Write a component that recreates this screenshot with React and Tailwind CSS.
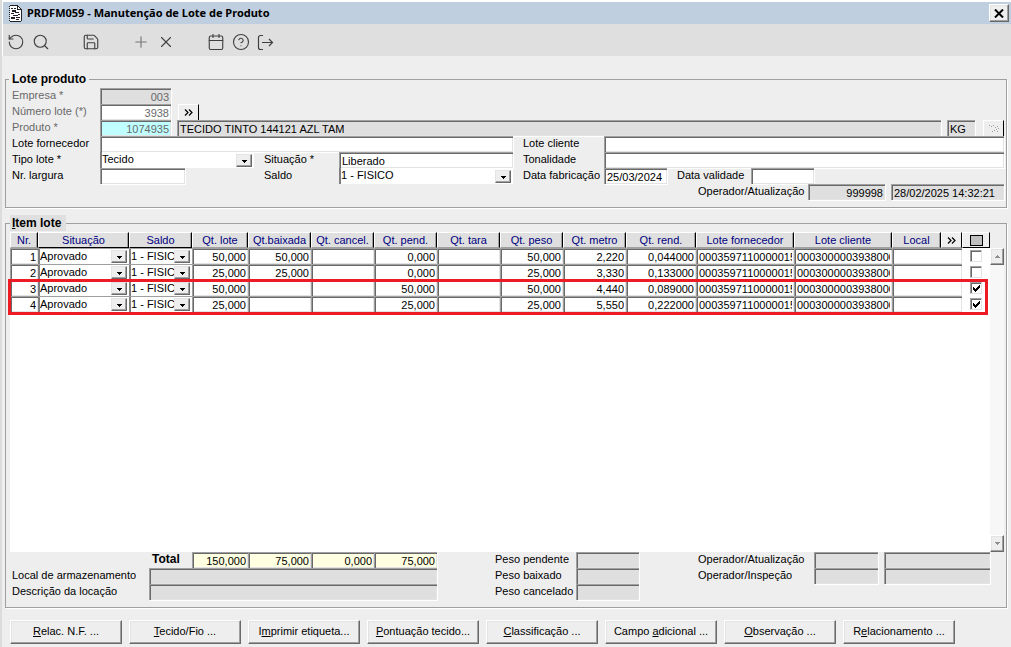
import React from 'react';
import { RotateCcw, Search, Save, Plus, X, Calendar, CircleHelp, LogOut } from 'lucide-react';
import clsx from 'clsx';

const sunken =
  'block h-4 min-w-0 rounded-none border-0 border-l border-t border-[#a0a0a0] px-[2px] leading-[15px] outline-none shadow-[inset_1px_1px_#696969,inset_-1px_-1px_#e3e3e3,1px_1px_#ffffff]';

const raised =
  'border border-t-white border-l-white border-r-[#696969] border-b-[#696969] bg-[#eeeeee] shadow-[inset_-1px_-1px_#a0a0a0,inset_1px_1px_#e3e3e3]';

const Field = ({ id, label, value = '', className = 'bg-white' }) => (
  <input id={id} aria-label={label} defaultValue={value} className={clsx(sunken, className)} />
);

const Label = ({ htmlFor, className, children }) => (
  <label htmlFor={htmlFor} className={clsx('shrink-0 whitespace-nowrap leading-[14px]', className)}>{children}</label>
);

const Dropdown = ({ id, label, value, className }) => (
  <span className={clsx('relative block h-4 bg-white', className)}>
    <select id={id} aria-label={label} defaultValue={value} className="block h-full w-full appearance-none rounded-none border-l-2 border-[#808080] bg-white pb-[2px] pr-[18px] text-[11px] leading-[14px] outline-none">
      <option>{value}</option>
    </select>
    <span className="pointer-events-none absolute bottom-px right-[2px] flex h-[13px] w-4 items-center justify-center border border-t-[#e3e3e3] border-l-[#e3e3e3] border-r-[#696969] border-b-[#696969] bg-[#eeeeee] shadow-[inset_-1px_-1px_#a0a0a0]">
      <svg width="5" height="3" viewBox="0 0 5 3" className="mt-[2px]" shapeRendering="crispEdges"><path d="M0 0h5v1H4v1H3v1H2V2H1V1H0z" /></svg>
    </span>
  </span>
);

const Chevrons = () => (
  <svg width="9" height="7" viewBox="0 0 9 7" fill="none" stroke="currentColor" strokeWidth="1.2">
    <path d="M1 .5l3 3-3 3M5 .5l3 3-3 3" />
  </svg>
);

const DocumentIcon = () => (
  <svg width="13" height="17" viewBox="0 0 13 17" shapeRendering="crispEdges">
    <path d="M1 1h8l3 3v12H1z" fill="#fff" />
    <path d="M1 0h8v1H1zM9 1h1v1H9zM10 2h1v1h-1zM11 3h1v1h-1zM12 4h1v12h-1zM1 16h11v1H1zM8 1h1v4H8zM8 4h4v1H8z" fill="#222" />
    <path d="M0 1h1v1H0zM0 3h1v1H0zM0 5h1v1H0zM0 7h1v1H0zM0 9h1v1H0zM0 11h1v1H0zM0 13h1v1H0zM0 15h1v1H0z" fill="#222" />
    <path d="M2 3h2v1H2zM5 3h2v1H5zM3 5h4v2H3zM2 8h3v1H2zM6 7h4v1H6zM4 10h5v1H4zM9 9h2v1H9zM2 12h4v2H2zM7 12h4v1H7zM7 14h3v1H7z" fill="#222" />
  </svg>
);

const toolbar = [
  { label: 'Desfazer', icon: RotateCcw },
  { label: 'Pesquisar', icon: Search },
  { label: 'Salvar', icon: Save, className: 'ml-[25px]' },
  { label: 'Incluir', icon: Plus, className: 'ml-[25px] text-[#777777]' },
  { label: 'Excluir', icon: X },
  { label: 'Calendário', icon: Calendar, className: 'ml-[25px]' },
  { label: 'Ajuda', icon: CircleHelp },
  { label: 'Sair', icon: LogOut },
];

const ExitIcon = () => (
  <svg width="17" height="17" viewBox="0 0 17 17" fill="none" stroke="currentColor" strokeWidth="1.2">
    <path d="M6 1.5H3.500a2 2 0 0 0-2 2v10a2 2 0 0 0 2 2H6M5 8.500h10.500M12 5l3.500 3.500L12 12" />
  </svg>
);

const columns = [
  { name: 'Nr.', col: 'w-[28px]' },
  { name: 'Situação', col: 'w-[91px]', dark: true },
  { name: 'Saldo', col: 'w-[63px]', dark: true },
  { name: 'Qt. lote', col: 'w-[56px]' },
  { name: 'Qt.baixada', col: 'w-[63px]' },
  { name: 'Qt. cancel.', col: 'w-[63px]' },
  { name: 'Qt. pend.', col: 'w-[63px]' },
  { name: 'Qt. tara', col: 'w-[63px]' },
  { name: 'Qt. peso', col: 'w-[63px]' },
  { name: 'Qt. metro', col: 'w-[63px]' },
  { name: 'Qt. rend.', col: 'w-[70px]' },
  { name: 'Lote fornecedor', col: 'w-[98px]' },
  { name: 'Lote cliente', col: 'w-[98px]' },
  { name: 'Local', col: '' },
];

const rows = [
  { nr: '1', qts: ['50,000', '50,000', '', '0,000', '', '50,000', '2,220', '0,044000'], checked: false },
  { nr: '2', qts: ['25,000', '25,000', '', '0,000', '', '25,000', '3,330', '0,133000'], checked: false },
  { nr: '3', qts: ['50,000', '', '', '50,000', '', '50,000', '4,440', '0,089000'], checked: true },
  { nr: '4', qts: ['25,000', '', '', '25,000', '', '25,000', '5,550', '0,222000'], checked: true },
];

const actions = [
  ['', 'R', 'elac. N.F. ...'],
  ['', 'T', 'ecido/Fio ...'],
  ['I', 'm', 'primir etiqueta...'],
  ['', 'P', 'ontuação tecido...'],
  ['', 'C', 'lassificação ...'],
  ['Campo ', 'a', 'dicional ...'],
  ['', 'O', 'bservação ...'],
  ['R', 'e', 'lacionamento ...'],
];

const LoteProduto = () => (
  <fieldset className="mt-[15px] border border-[#a0a0a0] px-[2px] pb-[7px] pt-px shadow-[1px_1px_#ffffff]">
    <legend className="ml-px h-4 px-[3px] text-[12px] font-bold">Lote produto</legend>
    <div className="pl-1">
      <div className="flex h-4 text-[#696969]">
        <Label htmlFor="empresa" className="w-[88px]">Empresa *</Label>
        <Field id="empresa" value="003" className="w-[71px] bg-[#dfdfdf] text-right" />
      </div>
      <div className="flex h-4 text-[#696969]">
        <Label htmlFor="numero" className="w-[88px]">Número lote (*)</Label>
        <Field id="numero" value="3938" className="w-[71px] bg-white text-right" />
        <button aria-label="Detalhes do lote" className="ml-[7px] flex h-4 w-[21px] items-center justify-center border-l border-t border-r border-l-white border-t-white border-r-black text-black"><Chevrons /></button>
      </div>
      <div className="flex h-4">
        <Label htmlFor="produto" className="w-[88px] text-[#696969]">Produto *</Label>
        <Field id="produto" value="1074935" className="w-[71px] bg-[#c0ffff] text-right text-[#696969]" />
        <Field label="Descrição do produto" value="TECIDO TINTO 144121 AZL TAM" className="ml-[6px] flex-1 bg-[#dfdfdf]" />
        <Field label="Unidade" value="KG" className="ml-[6px] w-[28px] bg-[#dfdfdf]" />
        <button disabled aria-label="Detalhes do produto" className="ml-2 flex h-4 w-[21px] items-center justify-center border-l border-t border-r border-l-white border-t-white border-r-black text-[#a0a0a0]">
          <svg width="12" height="9" viewBox="0 0 12 9" fill="currentColor" shapeRendering="crispEdges"><path d="M1 1h1v1H1zM3 2h1v1H3zM5 1h1v1H5zM7 3h1v1H7zM9 2h1v1H9zM8 5h1v1H8zM6 6h1v1H6zM4 7h1v1H4zM10 4h1v1h-1zM9 7h1v1H9z" /></svg>
        </button>
      </div>
      <div className="flex">
        <div className="w-[501px] shrink-0">
          <div className="flex h-4">
            <Label htmlFor="fornecedor" className="w-[88px]">Lote fornecedor</Label>
            <Field id="fornecedor" className="flex-1 bg-white" />
          </div>
          <div className="flex h-4">
            <Label htmlFor="tipo" className="w-[88px]">Tipo lote *</Label>
            <Dropdown id="tipo" value="Tecido" className="w-[154px]" />
            <Label htmlFor="situacao" className="ml-[10px] w-[75px]">Situação *</Label>
            <Field id="situacao" value="Liberado" className="flex-1 bg-white" />
          </div>
          <div className="flex h-4">
            <Label htmlFor="largura" className="w-[88px]">Nr. largura</Label>
            <Field id="largura" className="w-[85px] bg-white" />
            <Label htmlFor="saldo" className="ml-[79px] w-[75px]">Saldo</Label>
            <Dropdown id="saldo" value="1 - FISICO" className="flex-1" />
          </div>
        </div>
        <div className="min-w-0 flex-1 pl-[10px]">
          <div className="flex h-4">
            <Label htmlFor="cliente" className="w-[81px]">Lote cliente</Label>
            <Field id="cliente" className="flex-1 bg-white" />
          </div>
          <div className="flex h-4">
            <Label htmlFor="tonalidade" className="w-[81px]">Tonalidade</Label>
            <Field id="tonalidade" className="flex-1 bg-white" />
          </div>
          <div className="flex h-4">
            <Label htmlFor="fabricacao" className="w-[81px]">Data fabricação</Label>
            <Field id="fabricacao" value="25/03/2024" className="w-[63px] bg-white" />
            <Label htmlFor="validade" className="ml-[10px] w-[74px]">Data validade</Label>
            <Field id="validade" className="w-[63px] bg-white" />
          </div>
          <div className="flex h-4 justify-end">
            <Label htmlFor="operador" className="w-[110px]">Operador/Atualização</Label>
            <Field id="operador" value="999998" className="w-[77px] bg-[#dfdfdf] text-right" />
            <Field label="Data da atualização" value="28/02/2025 14:32:21" className="ml-[6px] w-[113px] bg-[#dfdfdf]" />
          </div>
        </div>
      </div>
    </div>
  </fieldset>
);

const ItemTable = () => (
  <table className="w-full table-fixed border-collapse bg-white">
    <colgroup>
      {columns.map((c) => <col key={c.name} className={c.col} />)}
      <col className="w-[21px]" />
      <col className="w-[28px]" />
    </colgroup>
    <thead>
      <tr className="h-4 text-[#000080]">
        {columns.map((c) => (
          <th key={c.name} className="h-4 p-0 font-normal">
            <div className={clsx('h-4 overflow-hidden whitespace-nowrap border border-l-white border-t-white border-r-black bg-[#dfdfdf] leading-[15px] shadow-[inset_-1px_0_#a0a0a0]', c.dark ? 'border-b-black' : 'border-b-[#a0a0a0]')}>{c.name}</div>
          </th>
        ))}
        <th className="h-4 p-0 font-normal">
          <button aria-label="Mais colunas" className="flex h-4 w-full items-center justify-center border border-b-[#a0a0a0] border-l-white border-r-black border-t-white bg-[#eeeeee] text-black"><Chevrons /></button>
        </th>
        <th className="h-4 p-0 font-normal">
          <button aria-label="Marcar todos" className="flex h-4 w-full items-center justify-center border border-b-black border-l-white border-r-black border-t-white bg-[#eeeeee]">
            <span className="h-[11px] w-[13px] border border-black bg-[#c0c0c0]" />
          </button>
        </th>
      </tr>
    </thead>
    <tbody>
      {rows.map((row) => (
        <tr key={row.nr} className="h-4">
          <td className="h-4 p-0"><Field label={'Nr. ' + row.nr} value={row.nr} className="w-full bg-white text-right" /></td>
          <td className="h-4 p-0"><Dropdown label={'Situação ' + row.nr} value="Aprovado" className="w-full border-t border-[#a0a0a0]" /></td>
          <td className="h-4 p-0"><Dropdown label={'Saldo ' + row.nr} value="1 - FISICO" className="w-full border-t border-[#a0a0a0]" /></td>
          {row.qts.map((qt, i) => (
            <td key={i} className="h-4 p-0"><Field label={columns[i + 3].name + ' ' + row.nr} value={qt} className="w-full bg-white text-right" /></td>
          ))}
          <td className="h-4 p-0"><Field label={'Lote fornecedor ' + row.nr} value="0003597110000015" className="w-full bg-white" /></td>
          <td className="h-4 p-0"><Field label={'Lote cliente ' + row.nr} value="0003000003938000" className="w-full bg-white" /></td>
          <td colSpan={2} className="h-4 p-0"><Field label={'Local ' + row.nr} className="w-full bg-white" /></td>
          <td className="h-4 p-0">
            <label className="relative mx-auto block h-3 w-3">
              <input type="checkbox" aria-label={'Marcar item ' + row.nr} defaultChecked={row.checked} className="peer block h-3 w-3 appearance-none border border-[#a0a0a0] border-b-[#e3e3e3] border-r-[#e3e3e3] bg-white shadow-[inset_1px_1px_#696969]" />
              <svg viewBox="0 0 7 7" width="7" height="7" shapeRendering="crispEdges" className="pointer-events-none absolute left-[3px] top-[3px] hidden peer-checked:block">
                <path d="M0 2h1v1h1v1h1V3h1V2h1V1h1V0h1v3H6v1H5v1H4v1H3v1H2V6H1V5H0z" />
              </svg>
            </label>
          </td>
        </tr>
      ))}
    </tbody>
  </table>
);

const ScrollButton = ({ label, up }) => (
  <button aria-label={label} className={clsx('flex h-[17px] w-[14px] items-center justify-center', raised)}>
    <svg width="5" height="3" viewBox="0 0 5 3" fill="#909090" shapeRendering="crispEdges"><path d={up ? 'M2 0h1v1h1v1h1v1H0V2h1V1h1z' : 'M0 0h5v1H4v1H3v1H2V2H1V1H0z'} /></svg>
  </button>
);

const ItemLote = () => (
  <fieldset className="mt-[7px] border border-[#a0a0a0] px-[2px] pb-[7px] pt-px shadow-[1px_1px_#ffffff]">
    <legend className="ml-[2px] h-4 bg-[#dfdfdf] pl-[2px] pr-[5px] text-[12px] font-bold"><u>I</u>tem lote</legend>
    <div className="flex h-[320px] pl-[2px]">
      <div className="relative flex min-w-0 flex-1 flex-col">
        <ItemTable />
        <div className="flex-1 bg-white" />
        <div className="pointer-events-none absolute -left-[2px] right-[2px] top-[47px] h-[36px] border-3 border-[#ed1c24]" />
      </div>
      <div className="flex w-[14px] flex-col justify-between pt-4">
        <ScrollButton label="Rolar para cima" up />
        <div className="flex-1 bg-[#f7f7f7]" />
        <ScrollButton label="Rolar para baixo" />
      </div>
    </div>
    <div className="flex pl-1 pr-[14px]">
      <div className="w-[425px] shrink-0">
        <div className="flex h-4">
          <span className="w-[180px] pl-[140px] text-[12px] font-bold leading-[14px]">Total</span>
          <Field label="Total lote" value="150,000" className="w-[56px] bg-[#ffffe1] text-right" />
          <Field label="Total baixada" value="75,000" className="w-[63px] bg-[#ffffe1] text-right" />
          <Field label="Total cancelada" value="0,000" className="w-[63px] bg-[#ffffe1] text-right" />
          <Field label="Total pendente" value="75,000" className="w-[63px] bg-[#ffffe1] text-right" />
        </div>
        <div className="flex h-4">
          <Label htmlFor="armazenamento" className="w-[137px]">Local de armazenamento</Label>
          <Field id="armazenamento" className="flex-1 bg-[#dfdfdf]" />
        </div>
        <div className="flex h-4">
          <Label htmlFor="locacao" className="w-[137px]">Descrição da locação</Label>
          <Field id="locacao" className="flex-1 bg-[#dfdfdf]" />
        </div>
      </div>
      <div className="ml-[58px]">
        {['Peso pendente', 'Peso baixado', 'Peso cancelado'].map((name) => (
          <div key={name} className="flex h-4">
            <Label htmlFor={name} className="w-[81px]">{name}</Label>
            <Field id={name} className="w-[63px] bg-[#dfdfdf]" />
          </div>
        ))}
      </div>
      <div className="ml-auto">
        {['Operador/Atualização', 'Operador/Inspeção'].map((name) => (
          <div key={name} className="flex h-4">
            <Label htmlFor={'item-' + name} className="w-[116px]">{name}</Label>
            <Field id={'item-' + name} className="w-[64px] bg-[#dfdfdf]" />
            <Field label={name + ' data'} className="ml-[6px] w-[106px] bg-[#dfdfdf]" />
          </div>
        ))}
      </div>
    </div>
  </fieldset>
);

const App = () => {
  return (
    <div className="min-h-screen border-l-2 border-[#dcdcdc] bg-[#eeeeee] font-['Liberation_Sans',Arial,sans-serif] text-[11px] leading-4 text-black">
      <div className="border-l border-t-2 border-white">
        <header className="flex h-[22px] items-center bg-[#bfcfe0] pl-[6px] pr-[2px]">
          <DocumentIcon />
          <h1 className="ml-[5px] flex-1 font-['Noto_Sans',Tahoma,sans-serif] text-[11px] font-bold">PRDFM059 - Manutenção de Lote de Produto</h1>
          <button aria-label="Fechar" className={clsx('flex h-[18px] w-5 items-center justify-center', raised)}>
            <svg width="10" height="9" viewBox="0 0 10 9" fill="none" stroke="#000" strokeWidth="2"><path d="M1 .5l8 8M9 .5l-8 8" /></svg>
          </button>
        </header>
        <nav className="flex h-8 items-center bg-[#dfdfdf] pt-1 text-[#404040]">
          {toolbar.map(({ label, icon: Icon, className }) => (
            <button key={label} aria-label={label} className={clsx('flex h-6 w-[25px] items-center justify-center', className)}>
              {label === 'Sair' ? <ExitIcon /> : <Icon size={18} strokeWidth={1.5} />}
            </button>
          ))}
        </nav>
      </div>
      <main className="pl-[3px] pr-1">
        <LoteProduto />
        <ItemLote />
        <div className="flex flex-wrap gap-[7px] pl-[5px] pt-3">
          {actions.map(([before, key, after]) => (
            <button key={before + key + after} className={clsx('h-6 w-[112px] whitespace-nowrap pb-[2px]', raised)}>
              {before}<u>{key}</u>{after}
            </button>
          ))}
        </div>
      </main>
    </div>
  );
};

export default App;
